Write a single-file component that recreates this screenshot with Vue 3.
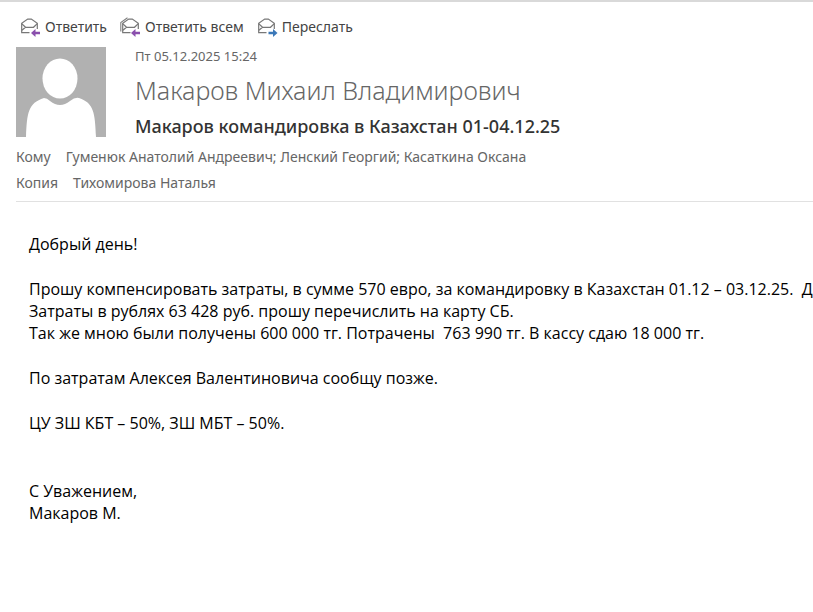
<template>
  <article class="message">
    <nav class="actions">
      <button v-for="action in actions" :key="action.label" type="button" class="action">
        <svg class="action-icon" width="20" height="20" viewBox="0 0 20 20" fill="none">
          <path v-if="action.all" d="M0.8 14.5V5.5L7.5 0.8" stroke="#808080" stroke-width="1.1" />
          <g stroke="#777" stroke-width="1.2" :transform="action.all ? 'translate(1 0)' : null">
            <path d="M9.5 15.7H1.7V6.2L7.7 2.1H11.3L17.3 6.2V12" />
            <path d="M1.7 6.6L5.5 10.3H13.5L17.3 6.6M5.5 10.3L1.9 13.2" />
          </g>
          <path v-if="action.forward" d="M20.5 16L16 12V14.7H11.5V17.3H16V20Z" fill="#3b78b8" />
          <path v-else d="M11 16L15.5 12V14.7H20V17.3H15.5V20Z" fill="#8a4fad" />
        </svg>
        <span>{{ action.label }}</span>
      </button>
    </nav>

    <header class="header">
      <svg class="avatar" width="90" height="90" viewBox="0 0 90 90">
        <rect width="90" height="90" fill="#b1b1b1" />
        <ellipse cx="44" cy="31.5" rx="17.5" ry="20" fill="#fff" />
        <path d="M10 90C11 66 12 56 28 51Q31 51 34 54Q44 62 54 54Q59 50 63 51C78 56 79 66 80 90Z" fill="#fff" />
      </svg>
      <div class="summary">
        <time class="date" datetime="2025-12-05T15:24">Пт 05.12.2025 15:24</time>
        <div class="sender">Макаров Михаил Владимирович</div>
        <h1 class="subject">Макаров командировка в Казахстан 01-04.12.25</h1>
      </div>
    </header>

    <dl class="recipients">
      <div v-for="row in recipients" :key="row.label" class="recipient-row">
        <dt>{{ row.label }}</dt>
        <dd>{{ row.names.join('; ') }}</dd>
      </div>
    </dl>

    <section class="body">
      <p v-for="(line, i) in lines" :key="i">{{ line }}</p>
    </section>
  </article>
</template>

<script setup>
const actions = [
  { label: 'Ответить' },
  { label: 'Ответить всем', all: true },
  { label: 'Переслать', forward: true }
];

const recipients = [
  { label: 'Кому', names: ['Гуменюк Анатолий Андреевич', 'Ленский Георгий', 'Касаткина Оксана'] },
  { label: 'Копия', names: ['Тихомирова Наталья'] }
];

const lines = [
  'Добрый день!',
  '',
  'Прошу компенсировать затраты, в сумме 570 евро, за командировку в Казахстан 01.12 – 03.12.25.  Д',
  'Затраты в рублях 63 428 руб. прошу перечислить на карту СБ.',
  'Так же мною были получены 600 000 тг. Потрачены  763 990 тг. В кассу сдаю 18 000 тг.',
  '',
  'По затратам Алексея Валентиновича сообщу позже.',
  '',
  'ЦУ ЗШ КБТ – 50%, ЗШ МБТ – 50%.',
  '',
  '',
  'С Уважением,',
  'Макаров М.'
];
</script>

<style>
body {
  margin: 0;
  background: #fff;
}
</style>

<style scoped>
.message {
  border-top: 2px solid #d9d9d9;
  padding: 13px 0 24px 16px;
  overflow: hidden;
  font-family: 'Noto Sans', 'Open Sans', sans-serif;
  color: #666;
}

.actions {
  display: flex;
  gap: 13px;
  padding-left: 4px;
}

.action {
  display: flex;
  align-items: center;
  gap: 5px;
  padding: 0;
  border: 0;
  background: none;
  font: 14px/24px 'Noto Sans', 'Open Sans', sans-serif;
  color: #444;
  cursor: pointer;
}

.action-icon {
  overflow: visible;
}

.header {
  display: flex;
  gap: 29px;
  margin-top: 8px;
}

.avatar {
  flex: none;
}

.summary {
  white-space: nowrap;
}

.date {
  display: block;
  font-size: 13px;
  line-height: 18px;
}

.sender {
  font-size: 25px;
  font-weight: 300;
  line-height: 50px;
}

.subject {
  margin: 0;
  font-size: 18px;
  font-weight: 500;
  line-height: 22px;
  color: #333;
}

.recipients {
  margin: 7px 0 0;
  padding-bottom: 5px;
  border-bottom: 1px solid #e1e1e1;
  font-size: 14px;
  line-height: 26px;
  white-space: nowrap;
}

.recipient-row {
  display: flex;
  gap: 15px;
}

.recipient-row dd {
  margin: 0;
}

.body {
  padding: 31px 0 0 13px;
  font-family: 'Open Sans', 'Noto Sans', sans-serif;
  font-size: 16px;
  color: #000;
  white-space: pre;
}

.body p {
  margin: 0;
  line-height: 22px;
}

.body p:empty {
  height: 23px;
}
</style>
